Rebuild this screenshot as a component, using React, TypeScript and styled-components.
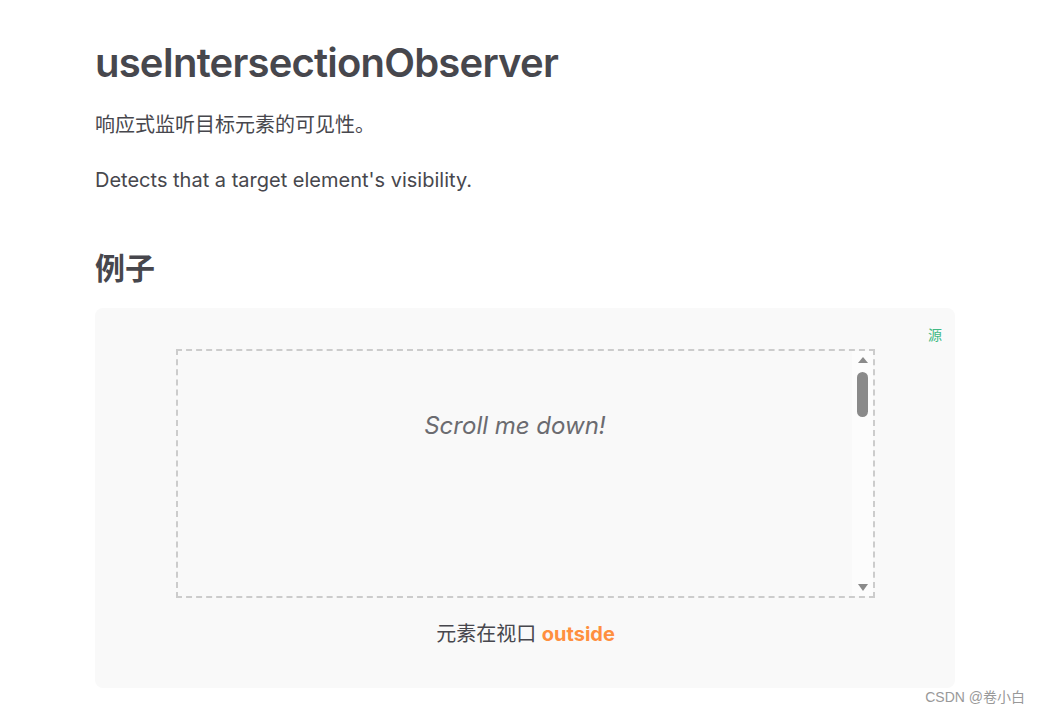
import React from 'react'
import styled, { createGlobalStyle } from 'styled-components'

const GlobalStyle = createGlobalStyle`
  html, body {
    margin: 0;
    padding: 0;
    background: #ffffff;
  }
  body {
    font-family: Inter, "Noto Sans CJK SC", sans-serif;
    color: #47474d;
  }
`

const Page = styled.div`
  position: relative;
  width: 1040px;
  height: 714px;
  box-sizing: border-box;
  padding: 38px 0 0 95px;
  overflow: hidden;
`

const Content = styled.main`
  width: 860px;
`

const Title = styled.h1`
  margin: 0;
  font-size: 40px;
  line-height: 50px;
  font-weight: 600;
  letter-spacing: -0.8px;
  color: #47474d;
`

const Paragraph = styled.p`
  margin: 20px 0 0;
  font-size: 20px;
  line-height: 35px;
  color: #47474d;
`

const SubTitle = styled.h2`
  margin: 50px 0 0;
  font-size: 30px;
  line-height: 40px;
  font-weight: 700;
  color: #47474d;
`

const Demo = styled.section`
  position: relative;
  margin-top: 20px;
  height: 380px;
  box-sizing: border-box;
  padding: 41px 80px 0 81px;
  background: #f9f9f9;
  border-radius: 8px;
`

const SourceLink = styled.a`
  position: absolute;
  top: 17px;
  right: 13px;
  font-size: 14px;
  line-height: 20px;
  color: #42b983;
  text-decoration: none;
`

const ScrollBox = styled.div`
  display: flex;
  height: 249px;
  box-sizing: border-box;
  border: 2px dashed #cccccc;
`

const ScrollArea = styled.div`
  flex: 1;
  overflow: hidden;
`

const ScrollInner = styled.div`
  height: 1100px;
  padding-top: 60px;
  box-sizing: border-box;
`

const Hint = styled.p`
  margin: 0;
  text-align: center;
  font-size: 24px;
  line-height: 30px;
  font-style: italic;
  color: #6b6b70;
`

const ScrollBar = styled.div`
  width: 21px;
  display: flex;
  flex-direction: column;
  align-items: center;
  padding: 6px 0 5px;
  box-sizing: border-box;
  background: #fcfcfc;
`

const Arrow = styled.div<{ $dir: 'up' | 'down' }>`
  width: 0;
  height: 0;
  border-left: 5.5px solid transparent;
  border-right: 5.5px solid transparent;
  ${p => p.$dir === 'up'
    ? 'border-bottom: 6px solid #8a8a8a;'
    : 'border-top: 7px solid #8a8a8a; margin-top: auto;'}
`

const Thumb = styled.div`
  width: 11px;
  height: 45px;
  margin-top: 9px;
  border-radius: 6px;
  background: #8a8a8a;
`

const Status = styled.p`
  margin: 21px 0 0;
  text-align: center;
  font-size: 20px;
  line-height: 30px;
  color: #47474d;
`

const State = styled.span<{ $visible: boolean }>`
  font-weight: 700;
  color: ${p => (p.$visible ? '#42b983' : '#ff8f3f')};
`

const Watermark = styled.div`
  position: absolute;
  right: 15px;
  bottom: 8px;
  font-family: "Liberation Sans", "Noto Sans CJK SC", sans-serif;
  font-size: 14px;
  color: #999999;
`

const App: React.FC = () => {
  const visible = false

  return <Page>
    <GlobalStyle />
    <Content>
      <Title>useIntersectionObserver</Title>
      <Paragraph>响应式监听目标元素的可见性。</Paragraph>
      <Paragraph>Detects that a target element's visibility.</Paragraph>
      <SubTitle>例子</SubTitle>
      <Demo>
        <SourceLink href="#">源</SourceLink>
        <ScrollBox>
          <ScrollArea>
            <ScrollInner>
              <Hint>Scroll me down!</Hint>
            </ScrollInner>
          </ScrollArea>
          <ScrollBar>
            <Arrow $dir="up" />
            <Thumb />
            <Arrow $dir="down" />
          </ScrollBar>
        </ScrollBox>
        <Status>
          元素在视口 <State $visible={visible}>{visible ? 'inside' : 'outside'}</State>
        </Status>
      </Demo>
    </Content>
    <Watermark>CSDN @卷小白</Watermark>
  </Page>
}

export default App
